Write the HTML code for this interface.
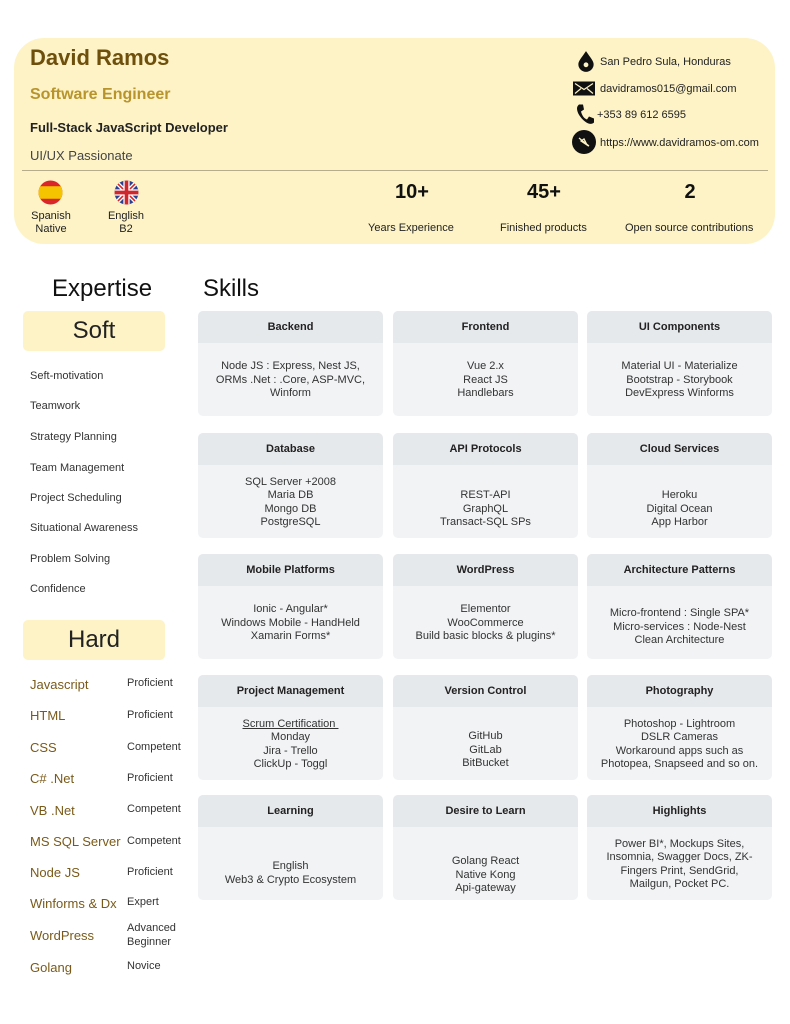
<!DOCTYPE html>
<html><head><meta charset="utf-8"><style>
*{margin:0;padding:0;box-sizing:border-box}
body{width:790px;height:1024px;background:#fff;font-family:"Liberation Sans",sans-serif;position:relative;overflow:hidden;color:#222}
.a{position:absolute;white-space:nowrap}
.hdr{position:absolute;left:14px;top:38px;width:761px;height:206px;background:#fdf3c6;border-radius:30px}
.div{position:absolute;left:22px;top:170px;width:746px;height:1px;background:#b8ad8a}
.card{position:absolute;width:185px;height:105px;background:#f1f3f5;border-radius:5px;overflow:hidden}
.card .h{height:32px;background:#e6e9ec;font-weight:bold;font-size:11px;text-align:center;line-height:32px;color:#222}
.card .b{position:absolute;top:34px;left:0;right:0;bottom:0;display:flex;align-items:center;justify-content:center;text-align:center;font-size:11px;line-height:13.5px;color:#333}
.pill{position:absolute;left:23px;width:142px;height:40px;background:#fdf3c6;border-radius:5px;text-align:center;font-size:24px;line-height:40px;color:#222}
.s{position:absolute;left:30px;font-size:11px;color:#333}
.hn{position:absolute;left:30px;font-size:13px;color:#7a5a1a}
.hl{position:absolute;left:127px;font-size:11px;color:#333;line-height:13.5px}
.ci{position:absolute;font-size:11px;color:#222}
</style></head><body>
<div class="hdr"></div>
<div class="a" style="left:30px;top:45px;font-size:22px;font-weight:bold;color:#6e4f0c">David Ramos</div>
<div class="a" style="left:30px;top:86px;font-size:16px;font-weight:bold;color:#b8942c">Software Engineer</div>
<div class="a" style="left:30px;top:120px;font-size:13px;font-weight:bold;color:#222">Full-Stack JavaScript Developer</div>
<div class="a" style="left:30px;top:148px;font-size:13px;color:#444">UI/UX Passionate</div>
<div class="div"></div>

<svg class="a" style="left:574px;top:49px" width="24" height="24" viewBox="0 0 22 22"><path d="M11 2 C7 8 4 11 4 14 A7 7 0 0 0 18 14 C18 11 15 8 11 2Z" fill="#111"/><circle cx="11" cy="14.5" r="2.2" fill="#fdf3c6"/></svg>
<div class="ci" style="left:600px;top:56px">San Pedro Sula, Honduras</div>
<svg class="a" style="left:573px;top:81px" width="22" height="15" viewBox="0 0 22 14"><rect width="22" height="14" fill="#111"/><path d="M2 2 L11 8 L20 2 M2 12 L8 7 M20 12 L14 7" stroke="#fdf3c6" stroke-width="1.2" fill="none"/></svg>
<div class="ci" style="left:600px;top:83px">davidramos015@gmail.com</div>
<svg class="a" style="left:575px;top:103px" width="20" height="23" viewBox="0 0 20 22"><path d="M4 1 L8 1 L9 6 L6 8 C7 12 9 15 12 16 L14 13 L19 15 L19 19 C17 21 14 21 10 18 C5 14 2 9 2 5 C2 3 3 2 4 1Z" fill="#111"/></svg>
<div class="ci" style="left:597px;top:109px">+353 89 612 6595</div>
<svg class="a" style="left:572px;top:130px" width="24" height="24" viewBox="0 0 24 24"><circle cx="12" cy="12" r="12" fill="#111"/><path d="M7 8 L17 16 M9 11 L12 9 L15 15Z" stroke="#fdf3c6" stroke-width="1.3" fill="none"/></svg>
<div class="ci" style="left:600px;top:137px">https://www.davidramos-om.com</div>

<svg class="a" style="left:38px;top:180px" width="25" height="25" viewBox="0 0 24 24"><defs><clipPath id="c1"><circle cx="12" cy="12" r="11.5"/></clipPath></defs><g clip-path="url(#c1)"><rect width="24" height="24" fill="#d9262b"/><rect y="6" width="24" height="12" fill="#f5c400"/></g></svg>
<svg class="a" style="left:114px;top:180px" width="25" height="25" viewBox="0 0 24 24"><defs><clipPath id="c2"><circle cx="12" cy="12" r="11.5"/></clipPath></defs><g clip-path="url(#c2)"><rect width="24" height="24" fill="#2a3f8f"/><path d="M0 0L24 24M24 0L0 24" stroke="#fff" stroke-width="4"/><path d="M0 0L24 24M24 0L0 24" stroke="#d0262d" stroke-width="1.5"/><path d="M12 0V24M0 12H24" stroke="#fff" stroke-width="6"/><path d="M12 0V24M0 12H24" stroke="#d0262d" stroke-width="3.5"/></g></svg>
<div class="a" style="left:26px;top:210px;width:50px;text-align:center;font-size:11px;line-height:13px;color:#222">Spanish<br>Native</div>
<div class="a" style="left:101px;top:210px;width:50px;text-align:center;font-size:11px;line-height:13px;color:#222">English<br>B2</div>

<div class="a" style="left:370px;top:181px;width:84px;text-align:center;font-size:20px;font-weight:bold;color:#111">10+</div>
<div class="a" style="left:500px;top:181px;width:88px;text-align:center;font-size:20px;font-weight:bold;color:#111">45+</div>
<div class="a" style="left:625px;top:181px;width:130px;text-align:center;font-size:20px;font-weight:bold;color:#111">2</div>
<div class="ci" style="left:368px;top:222px">Years Experience</div>
<div class="ci" style="left:500px;top:222px">Finished products</div>
<div class="ci" style="left:625px;top:222px">Open source contributions</div>

<div class="a" style="left:52px;top:275px;font-size:24px;color:#111">Expertise</div>
<div class="a" style="left:203px;top:275px;font-size:24px;color:#111">Skills</div>
<div class="pill" style="top:311px">Soft</div>
<div class="s" style="top:370px">Seft-motivation</div>
<div class="s" style="top:400px">Teamwork</div>
<div class="s" style="top:431px">Strategy Planning</div>
<div class="s" style="top:462px">Team Management</div>
<div class="s" style="top:492px">Project Scheduling</div>
<div class="s" style="top:522px">Situational Awareness</div>
<div class="s" style="top:553px">Problem Solving</div>
<div class="s" style="top:583px">Confidence</div>
<div class="pill" style="top:620px">Hard</div>
<div class="hn" style="top:677px">Javascript</div><div class="hl" style="top:677px">Proficient</div>
<div class="hn" style="top:708px">HTML</div><div class="hl" style="top:709px">Proficient</div>
<div class="hn" style="top:740px">CSS</div><div class="hl" style="top:741px">Competent</div>
<div class="hn" style="top:771px">C# .Net</div><div class="hl" style="top:772px">Proficient</div>
<div class="hn" style="top:803px">VB .Net</div><div class="hl" style="top:803px">Competent</div>
<div class="hn" style="top:834px">MS SQL Server</div><div class="hl" style="top:835px">Competent</div>
<div class="hn" style="top:865px">Node JS</div><div class="hl" style="top:866px">Proficient</div>
<div class="hn" style="top:896px">Winforms &amp; Dx</div><div class="hl" style="top:896px">Expert</div>
<div class="hn" style="top:928px">WordPress</div><div class="hl" style="top:922px">Advanced<br>Beginner</div>
<div class="hn" style="top:960px">Golang</div><div class="hl" style="top:960px">Novice</div>

<div class="card" style="left:198px;top:311px"><div class="h">Backend</div><div class="b">Node JS : Express, Nest JS,<br>ORMs .Net : .Core, ASP-MVC,<br>Winform</div></div>
<div class="card" style="left:393px;top:311px"><div class="h">Frontend</div><div class="b">Vue 2.x<br>React JS<br>Handlebars</div></div>
<div class="card" style="left:587px;top:311px"><div class="h">UI Components</div><div class="b">Material UI - Materialize<br>Bootstrap - Storybook<br>DevExpress Winforms</div></div>
<div class="card" style="left:198px;top:433px"><div class="h">Database</div><div class="b">SQL Server +2008<br>Maria DB<br>Mongo DB<br>PostgreSQL</div></div>
<div class="card" style="left:393px;top:433px"><div class="h">API Protocols</div><div class="b" style="padding-top:14px">REST-API<br>GraphQL<br>Transact-SQL SPs</div></div>
<div class="card" style="left:587px;top:433px"><div class="h">Cloud Services</div><div class="b" style="padding-top:14px">Heroku<br>Digital Ocean<br>App Harbor</div></div>
<div class="card" style="left:198px;top:554px"><div class="h">Mobile Platforms</div><div class="b">Ionic - Angular*<br>Windows Mobile - HandHeld<br>Xamarin Forms*</div></div>
<div class="card" style="left:393px;top:554px"><div class="h">WordPress</div><div class="b">Elementor<br>WooCommerce<br>Build basic blocks &amp; plugins*</div></div>
<div class="card" style="left:587px;top:554px"><div class="h">Architecture Patterns</div><div class="b" style="padding-top:8px">Micro-frontend : Single SPA*<br>Micro-services : Node-Nest<br>Clean Architecture</div></div>
<div class="card" style="left:198px;top:675px"><div class="h">Project Management</div><div class="b"><span><u>Scrum Certification&nbsp;</u><br>Monday<br>Jira - Trello<br>ClickUp - Toggl</span></div></div>
<div class="card" style="left:393px;top:675px"><div class="h">Version Control</div><div class="b" style="padding-top:12px">GitHub<br>GitLab<br>BitBucket</div></div>
<div class="card" style="left:587px;top:675px"><div class="h">Photography</div><div class="b">Photoshop - Lightroom<br>DSLR Cameras<br>Workaround apps such as<br>Photopea, Snapseed and so on.</div></div>
<div class="card" style="left:198px;top:795px"><div class="h">Learning</div><div class="b" style="padding-top:18px">English<br>Web3 &amp; Crypto Ecosystem</div></div>
<div class="card" style="left:393px;top:795px"><div class="h">Desire to Learn</div><div class="b" style="padding-top:22px">Golang React<br>Native Kong<br>Api-gateway</div></div>
<div class="card" style="left:587px;top:795px"><div class="h">Highlights</div><div class="b">Power BI*, Mockups Sites,<br>Insomnia, Swagger Docs, ZK-<br>Fingers Print, SendGrid,<br>Mailgun, Pocket PC.</div></div>
</body></html>
